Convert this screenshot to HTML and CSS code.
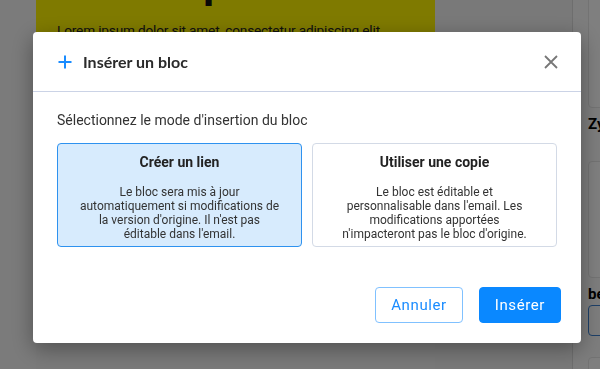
FILE: index.html
```html
<!DOCTYPE html>
<html lang="fr">
<head>
<meta charset="utf-8">
<title>Insérer un bloc</title>
<link rel="stylesheet" href="styles.css">
</head>
<body>
<div class="page">
  <div class="gutter"></div>
  <div class="canvas">
    <div class="hero">
      <h1 class="hero-title">Lorem ipsum dolor</h1>
      <p class="hero-text">Lorem ipsum dolor sit amet, consectetur adipiscing elit</p>
    </div>
  </div>
  <div class="middle"></div>
  <aside class="sidebar">
    <div class="side-card first"></div>
    <div class="side-label">Zy</div>
    <div class="side-card second"></div>
    <div class="side-label">be</div>
    <div class="side-btn"></div>
    <div class="side-card third"></div>
  </aside>
</div>

<div class="overlay">
  <div class="modal">
    <div class="modal-header">
      <svg class="plus" width="14" height="14" viewBox="0 0 14 14"><path d="M7 0.5V13.5M0.5 7H13.5" stroke="#1a8cff" stroke-width="2" fill="none"/></svg>
      <h2 class="modal-title">Insérer un bloc</h2>
      <svg class="close" width="14" height="14" viewBox="0 0 14 14"><path d="M1 1L13 13M13 1L1 13" stroke="#777" stroke-width="1.8" fill="none"/></svg>
    </div>
    <div class="modal-body">
      <p class="intro">Sélectionnez le mode d'insertion du bloc</p>
      <div class="choices">
        <div class="choice selected">
          <div class="choice-title">Créer un lien</div>
          <div class="choice-desc">Le bloc sera mis à jour<br>automatiquement si modifications de<br>la version d'origine. Il n'est pas<br>éditable dans l'email.</div>
        </div>
        <div class="choice">
          <div class="choice-title">Utiliser une copie</div>
          <div class="choice-desc">Le bloc est éditable et<br>personnalisable dans l'email. Les<br>modifications apportées<br>n'impacteront pas le bloc d'origine.</div>
        </div>
      </div>
    </div>
    <div class="modal-footer">
      <button class="btn btn-outline">Annuler</button>
      <button class="btn btn-primary">Insérer</button>
    </div>
  </div>
</div>
</body>
</html>
```

FILE: styles.css
```css
* { box-sizing: border-box; }
html, body { margin: 0; padding: 0; }
body {
  width: 600px;
  height: 369px;
  overflow: hidden;
  font-family: Roboto, "Noto Sans", sans-serif;
  color: #333;
}

.page {
  display: flex;
  height: 369px;
}
.gutter { width: 36px; background: #f6f6f6; }
.canvas { width: 399px; background: #f4f4f4; }
.hero {
  background: #fff400;
  height: 338px;
  padding-left: 21px;
  overflow: hidden;
}
.hero-title {
  margin: -40px 0 0;
  font-family: Lato, sans-serif;
  font-size: 44px;
  line-height: 44px;
  font-weight: 900;
  color: #111;
  white-space: nowrap;
}
.hero-text {
  margin: 18px 0 0;
  font-size: 13.6px;
  line-height: 17px;
  letter-spacing: -0.15px;
  color: #222;
  white-space: nowrap;
}
.middle { flex: 1; background: #f3f3f3; }
.sidebar {
  width: 28px;
  border-left: 1px solid #dcdcdc;
  background: #fbfbfb;
  padding-left: 15px;
  overflow: hidden;
  display: flex;
  flex-direction: column;
}
.side-card {
  width: 120px;
  background: #fff;
  border: 1px solid #e6e6e6;
  border-radius: 4px;
  flex: none;
}
.side-card.first { height: 112px; margin-top: -4px; border-radius: 0 0 4px 4px; }
.side-card.second { height: 117px; margin-top: 26px; }
.side-card.third { height: 40px; margin-top: 21px; }
.side-label {
  font-weight: 700;
  font-size: 15px;
  line-height: 22px;
  color: #000;
  margin-top: 5px;
  white-space: nowrap;
}
.side-btn {
  width: 60px;
  height: 31px;
  border: 1px solid #3b7fd0;
  border-radius: 4px;
  flex: none;
}

.overlay {
  position: fixed;
  inset: 0;
  background: rgba(0, 0, 0, 0.5);
  padding: 32px 0 0 33px;
}
.modal {
  width: 548px;
  background: #fff;
  border-radius: 4px;
  box-shadow: 0 6px 22px rgba(0, 0, 0, 0.35);
}
.modal-header {
  height: 60px;
  border-bottom: 1px solid #cbd3e6;
  display: flex;
  align-items: center;
  padding: 0 23px 0 25px;
}
.plus { display: block; flex: none; }
.modal-title {
  margin: 0 0 0 11px;
  flex: 1;
  font-family: Lato, sans-serif;
  font-weight: 700;
  font-size: 16px;
  color: #2b2b2b;
}
.close { display: block; flex: none; }

.modal-body { padding: 18px 24px 0; }
.intro {
  margin: 0;
  font-size: 14px;
  line-height: 20px;
  color: #333;
}
.choices {
  margin-top: 13px;
  display: grid;
  grid-template-columns: 1fr 1fr;
  gap: 10px;
}
.choice {
  border: 1px solid #d3dae6;
  border-radius: 4px;
  padding: 8px 8px 5px;
  text-align: center;
  background: #fff;
}
.choice.selected {
  background: #d7ebfd;
  border-color: #2e92ef;
}
.choice-title {
  font-size: 14px;
  line-height: 20px;
  font-weight: 700;
  color: #222;
}
.choice-desc {
  margin-top: 13px;
  font-size: 12px;
  line-height: 14px;
  color: #333;
  white-space: nowrap;
}

.modal-footer {
  display: flex;
  justify-content: flex-end;
  gap: 16px;
  padding: 40px 20px 20px 24px;
}
.btn {
  height: 36px;
  padding: 0 15px;
  border-radius: 4px;
  font-family: Roboto, sans-serif;
  font-size: 15px;
  letter-spacing: 0.6px;
  border: 1px solid #80c1ff;
  cursor: pointer;
}
.btn-outline { background: #fff; color: #1a8cff; }
.btn-primary { background: #0a88ff; border-color: #0a88ff; color: #fff; }
```
